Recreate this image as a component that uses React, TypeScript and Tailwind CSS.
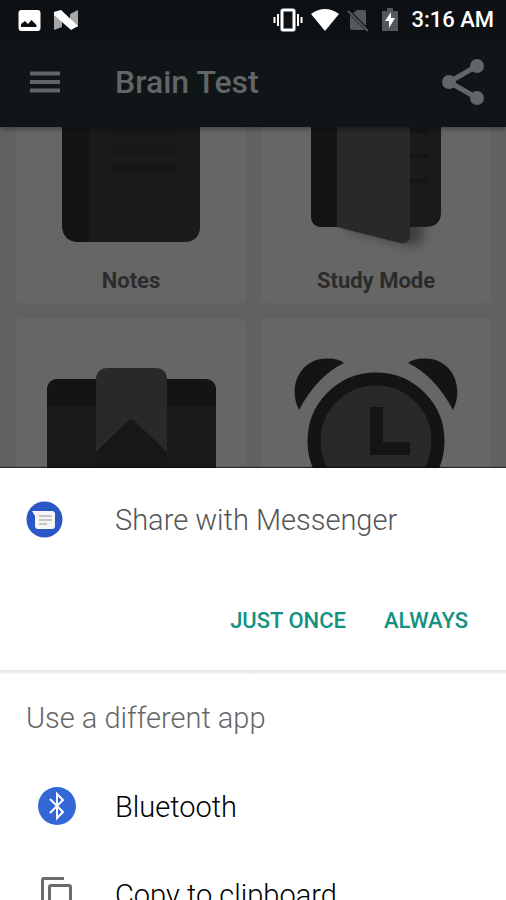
import type { ReactNode } from 'react';

interface Tile {
  id: string;
  title: string;
  art: ReactNode;
}

interface ShareTarget {
  id: string;
  label: string;
  icon: ReactNode;
}

function NotesArt() {
  return (
    <svg width="138" height="115" viewBox="0 0 138 115" aria-hidden="true">
      <path d="M0 0H138V99Q138 115 122 115H18Q0 115 0 97Z" fill="#1b1b1b" />
      <path d="M0 0H28V115H18Q0 115 0 97Z" fill="#141414" />
      <path d="M49 0H115V8H49ZM49 18H115V28H49ZM49 36H115V45H49Z" fill="#161616" />
    </svg>
  );
}

function StudyArt() {
  return (
    <svg width="130" height="134" viewBox="0 0 130 134" aria-hidden="true">
      <defs>
        <filter id="coverShadow" x="-30%" y="-30%" width="160%" height="160%">
          <feGaussianBlur stdDeviation="6" />
        </filter>
      </defs>
      <path d="M34 70H112V108Q112 120 98 118L34 101Z" fill="#000" opacity="0.4" filter="url(#coverShadow)" />
      <path d="M0 0H130V85Q130 100 114 100H11Q0 100 0 88Z" fill="#1a1a1a" />
      <path d="M0 0H26V100H11Q0 100 0 88Z" fill="#141414" />
      <path d="M99 2H118V6H99ZM99 27H118V31H99ZM99 52H118V56H99Z" fill="#151515" />
      <path d="M26 0H99V108Q99 118 89 116L26 100Z" fill="#292929" />
    </svg>
  );
}

function BookmarkArt() {
  return (
    <svg width="169" height="150" viewBox="0 0 169 150" aria-hidden="true">
      <path d="M0 150V33Q0 21 12 21H157Q169 21 169 33V150Z" fill="#1b1b1b" />
      <path d="M0 48V33Q0 21 12 21H157Q169 21 169 33V48Z" fill="#141414" />
      <path d="M49 94L84 62L120 94V120H49Z" fill="#171717" />
      <path d="M49 94V22Q49 10 61 10H108Q120 10 120 22V94L88 63Q84 60 80 63Z" fill="#292929" />
    </svg>
  );
}

function AlarmArt() {
  return (
    <svg width="166" height="150" viewBox="0 0 166 150" aria-hidden="true">
      <path d="M6 52C-6 28 8 0 34 0.500Q45 0 51 5Q24 18 6 52Z" fill="#141414" />
      <path d="M160 52C172 28 158 0 132 0.500Q121 0 115 5Q142 18 160 52Z" fill="#141414" />
      <circle cx="83" cy="83" r="62" fill="#292929" stroke="#141414" strokeWidth="13" />
      <path d="M77 49H90V84H117V97H77Z" fill="#141414" />
    </svg>
  );
}

const topTiles: Tile[] = [
  { id: 'notes', title: 'Notes', art: <NotesArt /> },
  { id: 'study', title: 'Study Mode', art: <StudyArt /> },
];

const bottomTiles: Tile[] = [
  { id: 'bookmarks', title: 'Bookmarks', art: <BookmarkArt /> },
  { id: 'alarm', title: 'Reminders', art: <AlarmArt /> },
];

const shareTargets: ShareTarget[] = [
  {
    id: 'bluetooth',
    label: 'Bluetooth',
    icon: (
      <svg width="38" height="38" viewBox="0 0 38 38" aria-hidden="true">
        <circle cx="19" cy="19" r="19" fill="#3367d6" />
        <path d="M12 12L25 25L19 31V7L25 13L12 26" fill="none" stroke="#fff" strokeWidth="2" />
      </svg>
    ),
  },
  {
    id: 'copy',
    label: 'Copy to clipboard',
    icon: (
      <svg width="38" height="38" viewBox="0 0 38 38" fill="none" stroke="#6b6b6b" strokeWidth="3" aria-hidden="true">
        <path d="M26 3.500H6Q4.500 3.500 4.500 5V29" />
        <rect x="11.500" y="10.500" width="21" height="25" rx="1.500" />
      </svg>
    ),
  },
];

function StatusBar() {
  return (
    <div className="flex h-10 items-center justify-between bg-[#0d1114] pl-[18px] pr-3 text-white">
      <div className="flex items-center gap-3">
        <svg width="23" height="23" viewBox="0 0 23 23" aria-hidden="true">
          <rect x="0.500" y="1" width="22" height="21" rx="3" fill="#fff" />
          <path d="M3 18V15L7 12L10 15L13.500 11L18.500 16V18Z" fill="#0d1114" />
        </svg>
        <svg width="26" height="22" viewBox="0 0 26 22" aria-hidden="true">
          <path d="M1 3L9 7V18L1 21ZM17 5L25 1V18L17 15Z" fill="#a5a7a8" />
          <path d="M1 3L8 1L25 17L18 21L1 6Z" fill="#fff" />
        </svg>
      </div>
      <div className="flex items-center">
        <svg width="30" height="24" viewBox="0 0 30 24" aria-hidden="true">
          <rect x="9" y="2" width="12" height="20" rx="1" fill="none" stroke="#fff" strokeWidth="3" />
          <path d="M1.500 9V15M5 6V18M25 6V18M28.500 9V15" stroke="#fff" strokeWidth="2" />
        </svg>
        <svg className="ml-2" width="28" height="24" viewBox="0 0 28 24" aria-hidden="true">
          <path d="M0 6Q14 -4 28 6L14 23Z" fill="#fff" />
        </svg>
        <svg className="ml-2" width="22" height="24" viewBox="0 0 22 24" aria-hidden="true">
          <path d="M10 2H17Q19 2 19 4V18L6 5ZM3 7L18 22H5Q3 22 3 20Z" fill="#55585a" />
          <path d="M1 3L21 23" stroke="#55585a" strokeWidth="2" />
        </svg>
        <svg className="ml-3" width="18" height="24" viewBox="0 0 18 24" aria-hidden="true">
          <path d="M1 3H6V0H12V3H17V23H1Z" fill="#55585a" />
          <path d="M10 4L4 13H8V20L14 10H10Z" fill="#fff" />
        </svg>
        <time className="ml-3 text-[22px] font-medium leading-6">3:16 AM</time>
      </div>
    </div>
  );
}

function AppBar() {
  return (
    <div className="flex h-[87px] items-center bg-[#101518] pb-1 pl-[30px] pr-[22px]">
      <button type="button" aria-label="Menu" className="w-[85px]">
        <svg width="30" height="22" viewBox="0 0 30 22" aria-hidden="true">
          <path d="M0 2.500H30M0 11H30M0 19.500H30" stroke="#626466" strokeWidth="4" />
        </svg>
      </button>
      <h1 className="flex-1 text-[32px] font-medium leading-10 text-[#636566]">Brain Test</h1>
      <button type="button" aria-label="Share">
        <svg width="42" height="46" viewBox="0 0 42 46" aria-hidden="true">
          <path d="M35 7L7 23L35 39" fill="none" stroke="#636566" strokeWidth="5" />
          <circle cx="35" cy="7" r="7" fill="#636566" />
          <circle cx="7" cy="23" r="7" fill="#636566" />
          <circle cx="35" cy="39" r="7" fill="#636566" />
        </svg>
      </button>
    </div>
  );
}

export default function App() {
  return (
    <div className="flex h-screen flex-col overflow-hidden bg-[#606163] font-['Roboto',sans-serif]">
      <header className="relative shrink-0 shadow-[0_2px_5px_rgba(0,0,0,0.35)]">
        <StatusBar />
        <AppBar />
      </header>

      <main className="flex min-h-0 flex-1 flex-col gap-[15px] overflow-hidden pl-4 pr-[15px]">
        <div className="grid shrink-0 grid-cols-2 gap-[15px]">
          {topTiles.map((tile) => (
            <button key={tile.id} type="button" className="flex h-44 flex-col items-center justify-between rounded-b bg-[#666666] pb-2">
              {tile.art}
              <span className="text-[22px] font-bold leading-7 text-[#2b2b2b]">{tile.title}</span>
            </button>
          ))}
        </div>
        <div className="grid shrink-0 grid-cols-2 gap-[15px]">
          {bottomTiles.map((tile) => (
            <button key={tile.id} type="button" aria-label={tile.title} className="flex flex-col items-center rounded-md bg-[#666666] pt-10">
              {tile.art}
            </button>
          ))}
        </div>
      </main>

      <section aria-label="Share" className="relative h-[48%] shrink-0 overflow-hidden bg-white shadow-[0_-1px_1px_rgba(0,0,0,0.6)]">
        <div className="flex h-[102px] items-center pl-[26px]">
          <div className="w-[89px]">
            <svg width="37" height="37" viewBox="0 0 37 37" aria-hidden="true">
              <circle cx="18.500" cy="18.500" r="18" fill="#2a56c6" />
              <path d="M6 10H26Q29 10 29 13V25Q29 28 26 28H12Q9 28 9 25V15Z" fill="#f5f5f5" />
              <path d="M13 15H26M13 19H26M13 23H21" stroke="#c4c4c4" strokeWidth="2" />
            </svg>
          </div>
          <h2 className="pt-px text-[29px] font-light leading-9 text-[#555555]">Share with Messenger</h2>
        </div>
        <div className="flex h-[102px] items-center justify-end gap-[38px] pr-[38px]">
          <button type="button" className="text-[22px] font-medium leading-7 text-[#14917f]">JUST ONCE</button>
          <button type="button" className="text-[22px] font-medium leading-7 text-[#14917f]">ALWAYS</button>
        </div>
        <hr className="-mt-0.5 h-1 border-0 bg-gradient-to-b from-[#e4e4e4] to-[#f6f6f6]" />
        <h3 className="flex h-[88px] items-center pl-[26px] pt-px text-[29px] font-light text-[#666666]">Use a different app</h3>
        <ul>
          {shareTargets.map((target) => (
            <li key={target.id}>
              <button type="button" className="flex h-[88px] w-full items-center pl-[38px] text-left">
                <span className="w-[77px]">{target.icon}</span>
                <span className="pt-px text-[29px] font-light leading-9 text-black">{target.label}</span>
              </button>
            </li>
          ))}
        </ul>
      </section>
    </div>
  );
}
